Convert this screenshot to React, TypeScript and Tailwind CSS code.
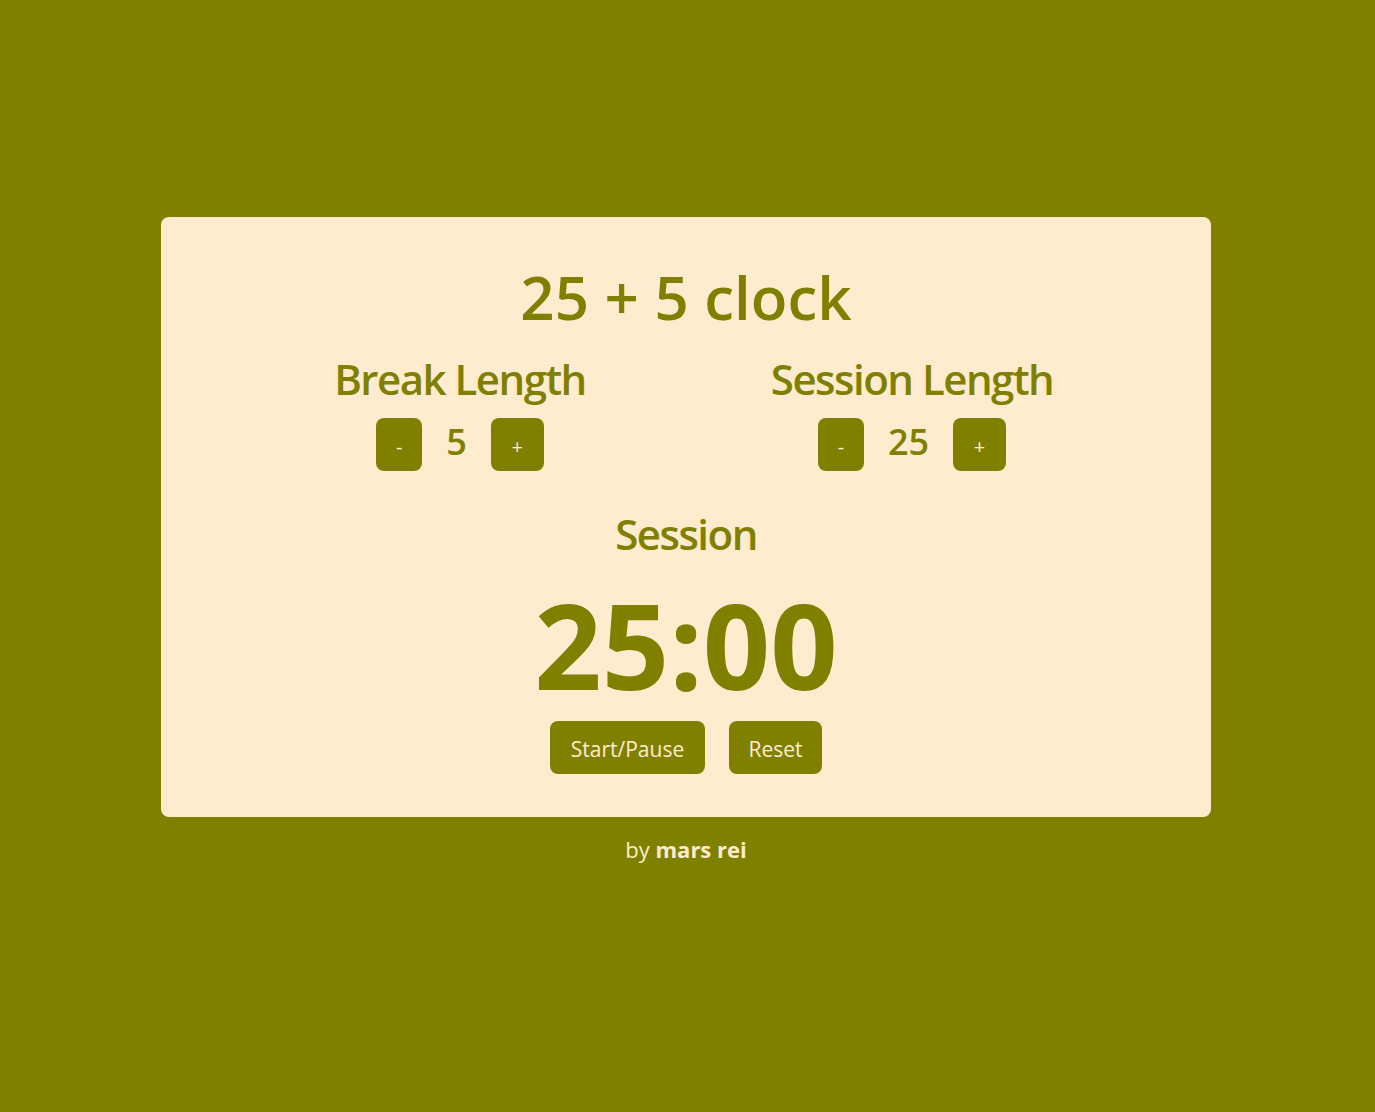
import React from "react";

const font = { fontFamily: '"Open Sans", "Noto Sans", sans-serif' };

const Stepper = ({ label, value }: { label: string; value: number }) => {
  return (
    <div className="flex flex-col items-center">
      <span className="text-[42px] leading-[60px] font-semibold tracking-[-1.5px]">{label}</span>
      <div className="flex items-center gap-6 mt-[9px]">
        <button className="w-[46px] h-[53px] rounded-lg bg-[#808000] text-[#ffebcd] text-xl pt-[4px]">
          -
        </button>
        <span className="text-[36px] leading-[40px] font-semibold -mt-[6px]">{value}</span>
        <button className="w-[53px] h-[53px] rounded-lg bg-[#808000] text-[#ffebcd] text-xl pt-[4px]">
          +
        </button>
      </div>
    </div>
  );
};

export default function App() {
  return (
    <div
      className="min-h-[1112px] w-full bg-[#808000] flex flex-col pt-[217px]"
      style={font}
    >
      <div className="ml-[161px] w-[1050px] h-[600px] bg-[#ffebcd] rounded-lg text-[#808000] flex flex-col items-center pt-[40px]">
        <h1 className="text-[60px] leading-[80px] font-semibold">25 + 5 clock</h1>
        <div className="grid grid-cols-2 w-[904px] mt-[12px]">
          <Stepper label="Break Length" value={5} />
          <Stepper label="Session Length" value={25} />
        </div>
        <span className="text-[42px] leading-[60px] font-semibold tracking-[-1.5px] mt-[33px]">
          Session
        </span>
        <span className="text-[118px] leading-[130px] font-bold mt-[16px]">25:00</span>
        <div className="flex gap-6 mt-[11px]">
          <button className="h-[53px] w-[155px] rounded-lg bg-[#808000] text-[#ffebcd] text-[21px] pt-[4px]">
            Start/Pause
          </button>
          <button className="h-[53px] w-[93px] rounded-lg bg-[#808000] text-[#ffebcd] text-[21px] pt-[4px]">
            Reset
          </button>
        </div>
      </div>
      <p className="ml-[161px] w-[1050px] text-center mt-[16px] text-[#ffebcd] text-[22px]">
        by <b className="font-bold">mars rei</b>
      </p>
    </div>
  );
}
